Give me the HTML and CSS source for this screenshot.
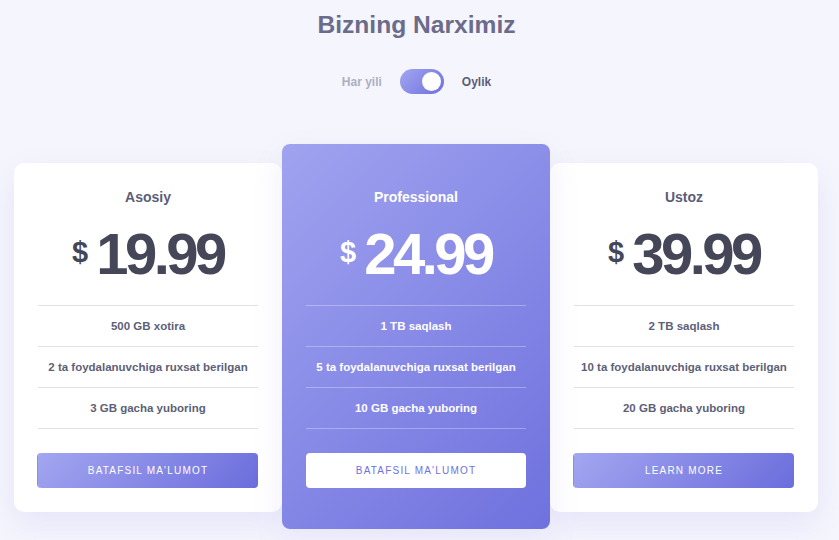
FILE: index.html
```html
<!DOCTYPE html>
<html lang="uz">
<head>
<meta charset="utf-8">
<title>Bizning Narximiz</title>
<link rel="stylesheet" href="styles.css">
</head>
<body>
<main class="page">
  <h1 class="heading">Bizning Narximiz</h1>
  <div class="switch-row">
    <span class="switch-label muted">Har yili</span>
    <span class="switch"><span class="knob"></span></span>
    <span class="switch-label">Oylik</span>
  </div>
  <section class="plans">
    <article class="card">
      <h2 class="plan-name">Asosiy</h2>
      <div class="price"><span class="cur">$</span><span class="amount">19.99</span></div>
      <ul class="features">
        <li>500 GB xotira</li>
        <li>2 ta foydalanuvchiga ruxsat berilgan</li>
        <li>3 GB gacha yuboring</li>
      </ul>
      <button class="btn">BATAFSIL MA'LUMOT</button>
    </article>
    <article class="card featured">
      <h2 class="plan-name">Professional</h2>
      <div class="price"><span class="cur">$</span><span class="amount">24.99</span></div>
      <ul class="features">
        <li>1 TB saqlash</li>
        <li>5 ta foydalanuvchiga ruxsat berilgan</li>
        <li>10 GB gacha yuboring</li>
      </ul>
      <button class="btn">BATAFSIL MA'LUMOT</button>
    </article>
    <article class="card">
      <h2 class="plan-name">Ustoz</h2>
      <div class="price"><span class="cur">$</span><span class="amount">39.99</span></div>
      <ul class="features">
        <li>2 TB saqlash</li>
        <li>10 ta foydalanuvchiga ruxsat berilgan</li>
        <li>20 GB gacha yuboring</li>
      </ul>
      <button class="btn">LEARN MORE</button>
    </article>
  </section>
</main>
</body>
</html>
```
FILE: styles.css
```css
* { box-sizing: border-box; }
html, body { margin: 0; padding: 0; }
body {
  background: #f5f5fd;
  font-family: "Liberation Sans", Arial, sans-serif;
  color: #5b5d78;
  height: 540px;
  overflow: hidden;
}
.page {
  width: 805px;
  margin-left: 14px;
  display: flex;
  flex-direction: column;
  align-items: center;
}
.heading {
  margin: 10px 0 0;
  font-size: 24.6px;
  line-height: 30px;
  font-weight: bold;
  color: #6b6b8a;
}
.switch-row {
  margin-top: 29px;
  display: flex;
  align-items: center;
  gap: 18px;
}
.switch-label {
  font-size: 12px;
  font-weight: bold;
  color: #5b5d78;
}
.switch-label.muted { color: #aeaec2; }
.switch {
  width: 44px;
  height: 25px;
  border-radius: 13px;
  background: linear-gradient(135deg, #a3a6f0, #6e6fdd);
  display: flex;
  align-items: center;
  justify-content: flex-end;
  padding-right: 3px;
}
.knob {
  width: 19px;
  height: 19px;
  border-radius: 50%;
  background: #fff;
}
.plans {
  margin-top: 50px;
  display: flex;
  align-items: flex-start;
  width: 100%;
}
.card {
  width: 268px;
  margin-top: 19px;
  background: #fff;
  border-radius: 10px;
  padding: 24px 24px 24px;
  text-align: center;
  box-shadow: 0 12px 30px rgba(120, 120, 220, 0.12);
}
.card.featured {
  margin-top: 0;
  padding-top: 43px;
  padding-bottom: 41px;
  background: linear-gradient(135deg, #a0a3ef 0%, #6f71de 100%);
  color: #fff;
  position: relative;
  z-index: 1;
  border-radius: 8px;
}
.plan-name {
  margin: 0;
  font-size: 14px;
  line-height: 20px;
  font-weight: bold;
  color: #5b5d78;
}
.featured .plan-name { color: #fff; }
.price {
  margin-top: 12px;
  display: flex;
  justify-content: center;
  align-items: center;
  color: #454759;
  height: 70px;
}
.featured .price { color: #fff; }
.cur {
  font-size: 29px;
  font-weight: bold;
  margin-right: 8px;
  margin-top: -4px;
}
.amount {
  font-size: 58px;
  font-weight: bold;
  letter-spacing: -3.5px;
  line-height: 70px;
}
.features {
  list-style: none;
  margin: 16px 0 0;
  padding: 0;
  border-bottom: 1px solid #e0e0e6;
}
.features li {
  border-top: 1px solid #e0e0e6;
  height: 41px;
  line-height: 40px;
  font-size: 11.5px;
  font-weight: bold;
  color: #5d5f78;
}
.featured .features { border-bottom-color: rgba(255,255,255,0.3); }
.featured .features li { border-top-color: rgba(255,255,255,0.3); color: #fff; }
.btn {
  display: block;
  width: 100%;
  height: 35px;
  margin-top: 24px;
  border: 0;
  border-radius: 4px;
  background: linear-gradient(135deg, #a3a6f0, #6b6ddc);
  color: #fff;
  font-family: "Liberation Sans", Arial, sans-serif;
  font-size: 10px;
  letter-spacing: 1.2px;
  box-shadow: -1px 0 0 #8c8ee6;
}
.featured .btn {
  background: #fff;
  color: #6f71de;
  box-shadow: none;
}
```
